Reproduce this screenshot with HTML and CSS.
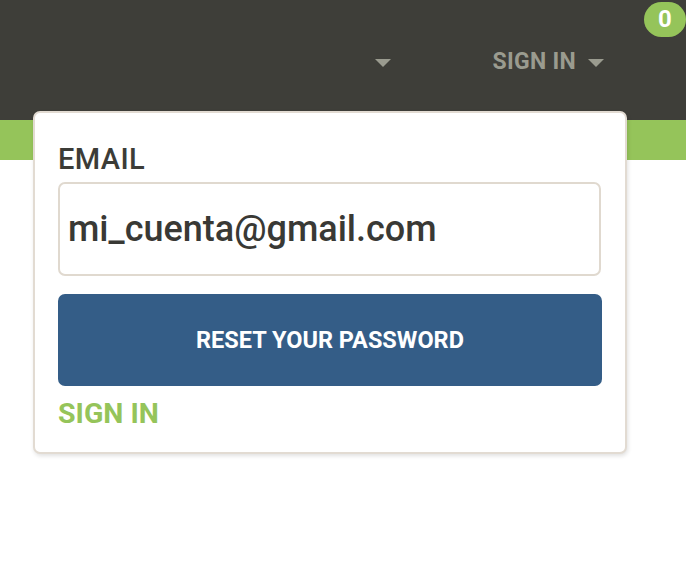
FILE: index.html
```html
<!DOCTYPE html>
<html lang="en">
<head>
<meta charset="utf-8">
<title>Reset password</title>
<link rel="stylesheet" href="styles.css">
</head>
<body>
<header class="topbar">
  <nav class="nav">
    <span class="caret caret-first"></span>
    <a class="nav-signin" href="#">SIGN IN <span class="caret"></span></a>
  </nav>
  <span class="badge">0</span>
</header>
<div class="greenbar"></div>
<div class="dropdown">
  <label class="field-label" for="email">EMAIL</label>
  <input class="field-input" id="email" type="email" value="mi_cuenta@gmail.com">
  <button class="btn-reset" type="button">RESET YOUR PASSWORD</button>
  <a class="link-signin" href="#">SIGN IN</a>
</div>
</body>
</html>
```

FILE: styles.css
```css
* { box-sizing: border-box; }
html, body { margin: 0; padding: 0; }
body {
  background: #ffffff;
  font-family: Roboto, "Liberation Sans", Arial, sans-serif;
  position: relative;
  width: 686px;
  height: 566px;
  overflow: hidden;
}
.topbar {
  position: relative;
  height: 120px;
  background: #3e3e39;
  padding-top: 48px;
  padding-right: 82px;
}
.nav {
  display: flex;
  justify-content: flex-end;
  align-items: center;
  height: 28px;
}
.caret {
  display: inline-block;
  width: 0;
  height: 0;
  border-left: 8px solid transparent;
  border-right: 8px solid transparent;
  border-top: 8px solid #9a9b8f;
  margin-top: 2px;
}
.caret-first { margin-right: 101px; }
.nav-signin {
  display: flex;
  align-items: center;
  gap: 12px;
  color: #9a9b8f;
  font-size: 23px;
  font-weight: 700;
  line-height: 28px;
  text-decoration: none;
  letter-spacing: 0.3px;
}
.badge {
  position: absolute;
  top: 2px;
  left: 644px;
  width: 42px;
  height: 35px;
  border-radius: 18px;
  background: #95c45a;
  color: #ffffff;
  font-size: 24px;
  font-weight: 700;
  line-height: 35px;
  text-align: center;
}
.greenbar {
  height: 40px;
  background: #95c45a;
}
.dropdown {
  position: absolute;
  left: 33px;
  top: 111px;
  width: 594px;
  height: 343px;
  background: #ffffff;
  border: 2px solid #e2dbd2;
  border-radius: 7px;
  box-shadow: 1px 2px 4px rgba(0, 0, 0, 0.12);
  padding: 28px 24px 0 23px;
  display: flex;
  flex-direction: column;
  align-items: flex-start;
}
.field-label {
  font-size: 29px;
  font-weight: 500;
  line-height: 36px;
  color: #3c3c37;
  letter-spacing: 0.4px;
}
.field-input {
  margin-top: 5px;
  width: 543px;
  height: 94px;
  border: 2px solid #e0d9cf;
  border-radius: 7px;
  padding: 0 8px;
  font-family: inherit;
  font-size: 36px;
  font-weight: 500;
  color: #393935;
  background: #ffffff;
  outline: none;
}
.btn-reset {
  margin-top: 18px;
  width: 544px;
  height: 92px;
  border: none;
  border-radius: 7px;
  background: #345d87;
  color: #ffffff;
  font-family: inherit;
  font-size: 23.5px;
  font-weight: 700;
  letter-spacing: 0;
  cursor: pointer;
}
.link-signin {
  margin-top: 10px;
  color: #95c45a;
  font-size: 28.5px;
  font-weight: 700;
  line-height: 36px;
  text-decoration: none;
}
```
